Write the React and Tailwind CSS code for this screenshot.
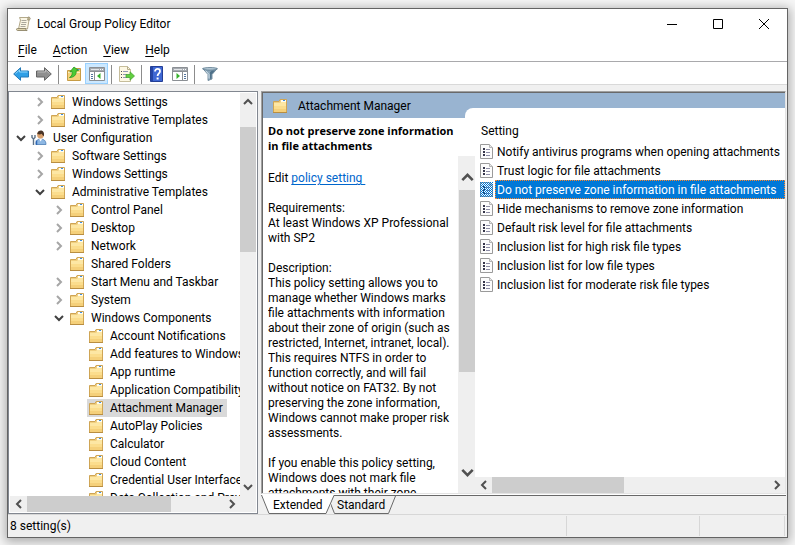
import React, { useState } from 'react'
import clsx from 'clsx'

const treeItems = [
  { label: 'Windows Settings', level: 1, state: 'closed' },
  { label: 'Administrative Templates', level: 1, state: 'closed' },
  { label: 'User Configuration', level: 0, state: 'open', icon: 'user' },
  { label: 'Software Settings', level: 1, state: 'closed' },
  { label: 'Windows Settings', level: 1, state: 'closed' },
  { label: 'Administrative Templates', level: 1, state: 'open' },
  { label: 'Control Panel', level: 2, state: 'closed' },
  { label: 'Desktop', level: 2, state: 'closed' },
  { label: 'Network', level: 2, state: 'closed' },
  { label: 'Shared Folders', level: 2 },
  { label: 'Start Menu and Taskbar', level: 2, state: 'closed' },
  { label: 'System', level: 2, state: 'closed' },
  { label: 'Windows Components', level: 2, state: 'open' },
  { label: 'Account Notifications', level: 3 },
  { label: 'Add features to Windows 10', level: 3 },
  { label: 'App runtime', level: 3 },
  { label: 'Application Compatibility', level: 3 },
  { label: 'Attachment Manager', level: 3 },
  { label: 'AutoPlay Policies', level: 3 },
  { label: 'Calculator', level: 3 },
  { label: 'Cloud Content', level: 3 },
  { label: 'Credential User Interface', level: 3 },
  { label: 'Data Collection and Preview Builds', level: 3 }
]

const indent = ['pl-[2px]', 'pl-[21px]', 'pl-[40px]', 'pl-[59px]']

const settings = [
  'Notify antivirus programs when opening attachments',
  'Trust logic for file attachments',
  'Do not preserve zone information in file attachments',
  'Hide mechanisms to remove zone information',
  'Default risk level for file attachments',
  'Inclusion list for high risk file types',
  'Inclusion list for low file types',
  'Inclusion list for moderate risk file types'
]

const description = `Description:
This policy setting allows you to
manage whether Windows marks
file attachments with information
about their zone of origin (such as
restricted, Internet, intranet, local).
This requires NTFS in order to
function correctly, and will fail
without notice on FAT32. By not
preserving the zone information,
Windows cannot make proper risk
assessments.

If you enable this policy setting,
Windows does not mark file
attachments with their zone`

const FolderIcon = () => (
  <svg width="14" height="14" viewBox="0 0 14 14" className="shrink-0" aria-hidden="true">
    <path d="M.5 13V2.500h5.500l1-2h6.500V13z" fill="#f0cf80" stroke="#cfa555" />
    <path d="M8 1h5v2H8z" fill="#fffdf2" />
    <path d="M10 1.500h2" stroke="#3f8ee0" />
    <path d="M1 4h6l1-1h5v5H1z" fill="#fde7a4" />
    <path d="M1 7h12v3H1z" fill="#fbdd8d" />
    <path d="M1 10h12v3H1z" fill="#f5d07a" />
    <path d="M0 13.500h14" stroke="#b98e41" />
  </svg>
)

const UserIcon = () => (
  <svg width="14" height="14" viewBox="0 0 14 14" className="shrink-0 overflow-visible" aria-hidden="true">
    <path d="M4 13.500c-.5-4 2-5.500 4.500-5.500s5.500 1 5.500 5.500z" fill="#8db7e3" stroke="#4c7eb5" strokeWidth=".8" />
    <path d="M7 7.500l1.500 3 2-3z" fill="#fff" />
    <circle cx="8.500" cy="4" r="3.400" fill="#d9a06c" />
    <path d="M5.200 3C5.500 0 8-.8 9.500-.4S12.500 1.500 12 5c-1 0-1.800-1.500-2.200-2.300C8.500 3.600 7 3.500 5.200 3z" fill="#4a3527" />
    <path d="M0 4v2.500L1.500 8v6M3 4v2.500L1.500 8" fill="none" stroke="#5d7287" strokeWidth="1.400" />
    <path d="M4.500 9.500V14" stroke="#2f68b4" strokeWidth="1.500" />
  </svg>
)

const PolicyIcon = ({ selected }) => (
  <svg width="13" height="15" viewBox="0 0 13 15" className="shrink-0" aria-hidden="true">
    <defs>
      <pattern id="dither" width="2" height="2" patternUnits="userSpaceOnUse">
        <path d="M0 0h1v1H0zM1 1h1v1H1z" fill="#0078d7" />
      </pattern>
    </defs>
    <path d="M.5.5h9l3 3v11H.5z" fill="#fcfcfc" stroke="#9a9a9a" />
    <path d="M9.500.5v3h3" fill="#e8e8e8" stroke="#b5b5b5" />
    <path d="M3 4h2v2H3zM3 7h2v2H3zM3 10h2v2H3z" fill="#35354a" />
    <path d="M6 5.500h4M6 8.500h4M6 11.500h4" stroke="#8f8fa8" />
    {selected && <path d="M0 0h13v15H0z" fill="url(#dither)" />}
  </svg>
)

const ScrollIcon = () => (
  <svg width="16" height="16" viewBox="0 0 16 16" aria-hidden="true">
    <path d="M3.500 1.500h9.500v2.500l-1.500 9h-9L4.500 4z" fill="#fbf6e4" stroke="#b3a98a" />
    <path d="M12.500 1c1.500-.3 2.500 2.500.8 3H11.500C12.500 3 11.300 1.200 12.500 1z" fill="#cfc39b" stroke="#8d8468" strokeWidth=".8" />
    <path d="M1.500 12.500h8.500c-.6 1 .2 2.500 1.200 2H1.800C0 14.500 0 12.500 1.500 12.500z" fill="#ddd2ab" stroke="#8d8468" strokeWidth=".9" />
    <path d="M5.500 4.500h5M5.500 6.500h5M5 8.500h5M4.500 10.500h5" stroke="#aaa79b" />
  </svg>
)

const BackIcon = ({ gray }) => (
  <svg width="16" height="14" viewBox="0 0 16 14" className={gray ? 'rotate-180' : ''} aria-hidden="true">
    <path d="M.7 7L7.500.7v3.300h8v6h-8v3.300z" fill={gray ? '#8f8f8f' : '#2f9fe6'} stroke={gray ? '#636363' : '#2379b8'} />
    <path d={gray ? 'M2.500 7.500l4 3.500V9h8' : 'M2.500 6.500l4-3.500v2h8'} fill="none" stroke={gray ? '#bababa' : '#8fd6fb'} />
  </svg>
)

const UpFolderIcon = () => (
  <svg width="16" height="16" viewBox="0 0 16 16" aria-hidden="true">
    <path d="M1.500 4.500H8l1-2h5.500v12h-13z" fill="#f6d27b" stroke="#c79c45" />
    <path d="M2 6.500h12" stroke="#fff0bd" />
    <path d="M11 3.500h2.500" stroke="#4b8fd8" />
    <path d="M3.500 11.500C6 10 6.500 8 6 5.500L3.800 6 8 1l4.500 3.500-2.300.3C10.500 9 8 11.500 3.500 11.500z" fill="#4ccb35" stroke="#279421" strokeWidth=".8" />
  </svg>
)

// "flip" puts the small tree pane on the right side
const ConsoleIcon = ({ flip }) => (
  <svg width="16" height="14" viewBox="0 0 16 14" aria-hidden="true">
    <path d="M.5.5h15v13H.5z" fill="#fff" stroke="#8b8f94" />
    <path d="M1 1h14v3H1z" fill="#a5aab0" />
    <path d="M2 2.500h8" stroke="#e3e5e8" />
    <path d="M11 2.500h1M13 2.500h1" stroke="#fff" />
    <path d="M1 4.500h14" stroke="#8b8f94" />
    {flip ? (
      <>
        <path d="M10.500 5v8" stroke="#8b8f94" />
        <path d="M12 7.500h2M12 9.500h2M12 11.500h2" stroke="#53759e" />
        <path d="M4.500 6l3.500 3-3.500 3z" fill="#37b22c" />
      </>
    ) : (
      <>
        <path d="M5.500 5v8" stroke="#8b8f94" />
        <path d="M2 7.500h2M2 9.500h2M2 11.500h2" stroke="#53759e" />
        <path d="M11.500 6L8 9l3.500 3z" fill="#37b22c" />
      </>
    )}
  </svg>
)

const ExportIcon = () => (
  <svg width="16" height="16" viewBox="0 0 16 16" aria-hidden="true">
    <path d="M.5.5h8l3 3v12H.5z" fill="#fdf8e4" stroke="#c6bd9b" />
    <path d="M8.500.5v3h3" fill="none" stroke="#b7ae8c" />
    <path d="M2 5.500h1M2 8.500h1M2 11.500h1" stroke="#4a4a4a" />
    <path d="M4 5.500h5M4 8.500h4M4 11.500h4" stroke="#9397b5" />
    <path d="M7 8.500h4V5.800l4.500 4.200-4.500 4.200v-2.700H7z" fill="#62cf3f" stroke="#46a636" strokeWidth=".8" />
  </svg>
)

const HelpIcon = () => (
  <svg width="13" height="16" viewBox="0 0 13 16" aria-hidden="true">
    <path d="M.5.5h12v15H.5z" fill="#3f68d4" stroke="#243f96" />
    <path d="M1 1h2v14H1z" fill="#2444a6" />
    <path d="M5 5.500c0-3.500 5-3.200 5-.3C10 7.500 7.600 7.400 7.600 10" fill="none" stroke="#fff" strokeWidth="1.800" />
    <path d="M6.600 11.500h2v2h-2z" fill="#fff" />
  </svg>
)

const FilterIcon = () => (
  <svg width="16" height="14" viewBox="0 0 16 14" aria-hidden="true">
    <path d="M.8 1.500L6 7.500v6l4-1.500V7.500l5.200-6z" fill="#8aa5b8" stroke="#6c8799" strokeWidth=".9" />
    <path d="M8 5l2-1.500h3L9.500 7.500v4l-1.500.5z" fill="#4f7189" />
    <path d="M3.500 3.500l3.500 4v4" fill="none" stroke="#d3e2ec" />
    <ellipse cx="8" cy="1.800" rx="7.300" ry="1.300" fill="#b4c8d5" stroke="#5a788d" strokeWidth=".8" />
  </svg>
)

const arrows = {
  up: 'M1 7l4-4 4 4',
  down: 'M1 3l4 4 4-4',
  left: 'M7 1L3 5l4 4',
  right: 'M3 1l4 4-4 4'
}

const Arrow = ({ dir, className = 'size-[10px]' }) => (
  <svg viewBox="0 0 10 10" className={className} fill="none" stroke="currentColor" strokeWidth="2" aria-hidden="true">
    <path d={arrows[dir]} />
  </svg>
)

const ScrollButton = ({ dir, label, className, iconClass }) => (
  <button type="button" aria-label={label} className={clsx('flex shrink-0 items-center justify-center text-[#505050]', className)}>
    <Arrow dir={dir} className={iconClass} />
  </button>
)

const ToolButton = ({ label, active, children }) => (
  <button
    type="button"
    aria-label={label}
    className={clsx(
      'flex h-[21px] w-[23px] items-center justify-center',
      active && 'border border-[#99d1ff] bg-[#cce8ff]'
    )}
  >
    {children}
  </button>
)

const Separator = () => <div className="mx-[3px] h-[19px] w-px bg-[#8c8c8c]" />

const MenuItem = ({ label }) => (
  <button type="button" className="px-2">
    <span className="underline underline-offset-2">{label[0]}</span>
    {label.slice(1)}
  </button>
)

const TitleBar = () => (
  <header className="flex h-[30px] shrink-0 items-center bg-white pl-2">
    <ScrollIcon />
    <h1 className="flex-1 pl-[5px]">Local Group Policy Editor</h1>
    <button type="button" aria-label="Minimize" className="flex h-full w-[46px] items-center justify-center">
      <svg width="10" height="10" aria-hidden="true"><path d="M0 5.500h10" stroke="#000" /></svg>
    </button>
    <button type="button" aria-label="Maximize" className="flex h-full w-[46px] items-center justify-center">
      <svg width="10" height="10" aria-hidden="true"><path d="M.5.5h9v9h-9z" fill="none" stroke="#000" /></svg>
    </button>
    <button type="button" aria-label="Close" className="flex h-full w-[46px] items-center justify-center">
      <svg width="10" height="10" aria-hidden="true"><path d="M0 0l10 10M10 0L0 10" stroke="#000" /></svg>
    </button>
  </header>
)

const Toolbar = () => (
  <div className="flex h-[24px] shrink-0 items-end border-y border-t-[#a9a9ac] border-b-[#d9d9d9] bg-white pl-px">
    <ToolButton label="Back"><BackIcon /></ToolButton>
    <ToolButton label="Forward"><BackIcon gray /></ToolButton>
    <Separator />
    <ToolButton label="Up one level"><UpFolderIcon /></ToolButton>
    <ToolButton label="Show console tree" active><ConsoleIcon /></ToolButton>
    <Separator />
    <ToolButton label="Export list"><ExportIcon /></ToolButton>
    <Separator />
    <ToolButton label="Help"><HelpIcon /></ToolButton>
    <ToolButton label="Show action pane"><ConsoleIcon flip /></ToolButton>
    <Separator />
    <ToolButton label="Filter"><FilterIcon /></ToolButton>
  </div>
)

const TreeRow = ({ item, selected, onSelect }) => (
  <li className={clsx('flex h-[18px]', indent[item.level])}>
    <span className="flex w-[19px] shrink-0 items-center justify-center">
      {item.state === 'closed' && <Arrow dir="right" className="size-[10px] text-[#a6a6a6]" />}
      {item.state === 'open' && <Arrow dir="down" className="size-[10px] text-[#404040]" />}
    </span>
    <button
      type="button"
      onClick={onSelect}
      className={clsx('flex items-center gap-[7px] pl-[2px] pr-1 whitespace-nowrap', selected && 'bg-[#d9d9d9]')}
    >
      {item.icon === 'user' ? <UserIcon /> : <FolderIcon />}
      {item.label}
    </button>
  </li>
)

const TreePanel = () => {
  const [selected, setSelected] = useState(17)
  return (
    <nav aria-label="Console tree" className="flex w-[250px] shrink-0 flex-col border border-[#828790] bg-white">
      <div className="flex min-h-0 flex-1">
        <ul className="min-w-0 flex-1 overflow-hidden pt-px">
          {treeItems.map((item, i) => (
            <TreeRow key={i} item={item} selected={i === selected} onSelect={() => setSelected(i)} />
          ))}
        </ul>
        <div className="mt-px mr-px flex w-[16px] flex-col bg-[#efefef]">
          <ScrollButton dir="up" label="Scroll tree up" className="h-[18px]" />
          <div className="mt-4 h-[125px] bg-[#cdcdcd]" />
          <ScrollButton dir="down" label="Scroll tree down" className="mt-auto h-[18px]" />
        </div>
      </div>
      <div className="mx-px mb-px flex h-[16px] bg-[#efefef]">
        <ScrollButton dir="left" label="Scroll tree left" className="w-[17px]" />
        <div className="w-[144px] bg-[#cdcdcd]" />
        <ScrollButton dir="right" label="Scroll tree right" className="mr-4 ml-auto w-[17px]" />
      </div>
    </nav>
  )
}

const PolicyDetails = () => (
  <section className="flex w-[212px] shrink-0 flex-col pl-[5px] leading-[15px]">
    <h2 className="pt-[5px] pb-[3px] font-['Open_Sans','Noto_Sans',sans-serif] text-[11px] leading-[15px] font-bold whitespace-nowrap">
      Do not preserve zone information
      <br />
      in file attachments
    </h2>
    <div className="flex min-h-0 flex-1">
      <div className="min-w-0 flex-1 overflow-hidden pt-[15px] whitespace-pre">
        <p>
          Edit <a href="#policy" className="text-[#0066cc] underline underline-offset-2">policy setting </a>
        </p>
        <p className="pt-[15px]">{'Requirements:\nAt least Windows XP Professional\nwith SP2'}</p>
        <p className="pt-[15px]">{description}</p>
      </div>
      <div className="flex w-[17px] flex-col bg-[#efefef] pl-px">
        <ScrollButton dir="up" label="Scroll details up" className="h-[34px] pt-2" iconClass="size-[13px]" />
        <div className="h-[182px] bg-[#cdcdcd]" />
        <ScrollButton dir="down" label="Scroll details down" className="mt-auto h-[34px] pb-2" iconClass="size-[13px]" />
      </div>
    </div>
  </section>
)

const SettingsList = () => {
  const [selected, setSelected] = useState(2)
  return (
    <section className="flex min-w-0 flex-1 flex-col">
      <div className="min-h-0 flex-1 overflow-hidden pt-px pl-[5px]">
        <table className="w-full border-collapse text-left whitespace-nowrap">
          <thead>
            <tr className="h-[23px]">
              <th scope="col" className="p-0 pl-px align-middle font-normal">Setting</th>
            </tr>
          </thead>
          <tbody>
            {settings.map((name, i) => (
              <tr key={name} onClick={() => setSelected(i)} className="h-[19px]">
                <td className="p-0">
                  <div className="flex h-[19px] items-center gap-[2px]">
                    <PolicyIcon selected={i === selected} />
                    <span
                      className={clsx(
                        'flex h-[19px] flex-1 items-center border border-dotted pl-px',
                        i === selected ? 'border-[#ff8728] bg-[#0078d7] text-white' : 'border-transparent'
                      )}
                    >
                      {name}
                    </span>
                  </div>
                </td>
              </tr>
            ))}
          </tbody>
        </table>
      </div>
      <div className="flex h-[16px] bg-[#efefef]">
        <ScrollButton dir="left" label="Scroll list left" className="w-[17px]" />
        <div className="w-[132px] bg-[#cdcdcd]" />
        <ScrollButton dir="right" label="Scroll list right" className="ml-auto w-[17px]" />
      </div>
    </section>
  )
}

const ViewTabs = () => (
  <div role="tablist" className="flex h-[19px] shrink-0 border-t border-[#696969]">
    <button type="button" role="tab" aria-selected="true" className="relative h-[18px] w-[70px] pl-3 text-left">
      <svg width="74" height="19" viewBox="0 0 74 19" className="absolute -top-px left-0 max-w-none" aria-hidden="true">
        <path d="M0 0l8 18.500h57L73 0z" fill="#fff" />
        <path d="M.5 0L8 18.500h57L73 .5" fill="none" stroke="#696969" />
      </svg>
      <span className="relative">Extended</span>
    </button>
    <button type="button" role="tab" aria-selected="false" className="relative h-[18px] w-[65px] pl-[6px] text-left">
      <svg width="66" height="18" viewBox="0 0 66 18" className="absolute top-0 left-0 max-w-none" aria-hidden="true">
        <path d="M-.5 7.500L3.500 17.500h54L64.500 0" fill="none" stroke="#696969" />
      </svg>
      <span className="relative">Standard</span>
    </button>
  </div>
)

const ResultPane = () => (
  <main className="flex min-w-0 flex-1 flex-col pr-px">
    <div className="flex min-h-0 flex-1 border border-t-[#a0a0a0] border-r-[#e3e3e3] border-b-[#e3e3e3] border-l-[#a0a0a0] bg-white">
      <div className="flex min-w-0 flex-1 flex-col border-t border-l border-[#696969]">
        <div className="flex h-[25px] shrink-0 bg-[#99b4d1]">
          <div className="flex w-[202px] items-center gap-[11px] pl-[10px]">
            <FolderIcon />
            <span>Attachment Manager</span>
          </div>
          <div className="mt-auto h-[10px] flex-1 rounded-tl-[8px] bg-white" />
        </div>
        <div className="flex min-h-0 flex-1">
          <PolicyDetails />
          <SettingsList />
        </div>
      </div>
    </div>
    <div className="h-px shrink-0 bg-white" />
    <ViewTabs />
  </main>
)

const StatusBar = () => (
  <footer className="flex h-[23px] shrink-0 border-t border-[#d7d7d7] py-px pr-[2px]">
    <span className="flex flex-1 items-center border-r border-[#d7d7d7] pl-[2px]">8 setting(s)</span>
    <span className="w-[133px] border-r border-[#d7d7d7]" />
    <span className="w-[85px] border-r border-[#d7d7d7]" />
  </footer>
)

const App = () => {
  return (
    <div className="h-screen overflow-hidden bg-[#f6f6f6] pt-2 pr-[7px] pb-[7px] pl-[7px] font-['Roboto','Open_Sans',sans-serif] text-[12px] leading-[16px] text-black">
      <div className="flex h-full flex-col border border-[#646464] bg-[#f0f0f0] shadow-[0_2px_10px_2px_rgba(0,0,0,0.3)]">
        <TitleBar />
        <div className="flex h-[22px] shrink-0 items-center bg-white pl-[2px]">
          <MenuItem label="File" />
          <MenuItem label="Action" />
          <MenuItem label="View" />
          <MenuItem label="Help" />
        </div>
        <Toolbar />
        <div className="flex min-h-0 flex-1 gap-[3px] pt-[6px]">
          <TreePanel />
          <ResultPane />
        </div>
        <StatusBar />
      </div>
    </div>
  )
}

export default App
